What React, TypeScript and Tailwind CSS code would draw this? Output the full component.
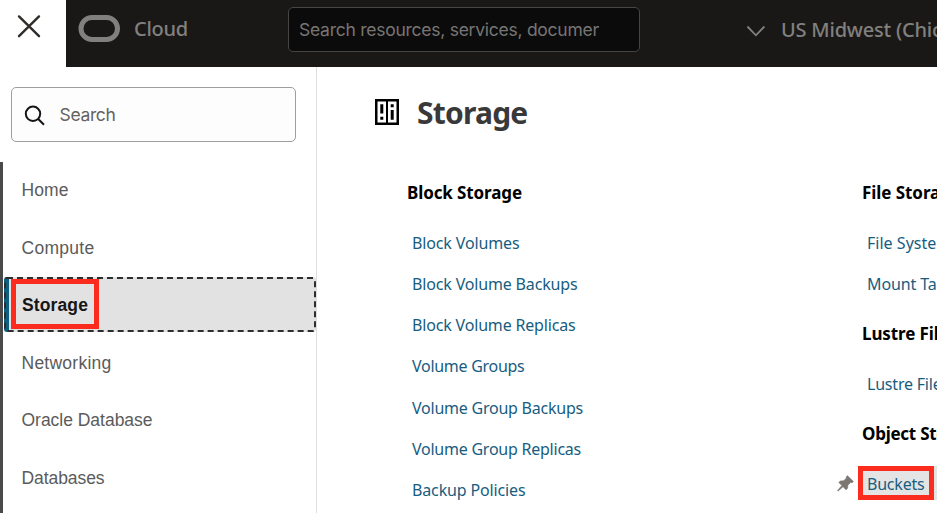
import React from "react";

const NOTO = "font-['Noto_Sans','Open_Sans',sans-serif]";

// One line of text tracked to a fixed advance width.
function Line({ children, w, className = "" }: { children: string; w: number; className?: string }) {
  const ref = React.useRef<HTMLSpanElement>(null);
  React.useLayoutEffect(() => {
    const el = ref.current!;
    el.style.letterSpacing = "0px";
    const natural = el.getBoundingClientRect().width;
    el.style.letterSpacing = `${(w - natural) / children.length}px`;
  }, [children, w]);
  return (
    <span ref={ref} className={`inline-block whitespace-pre ${className}`}>
      {children}
    </span>
  );
}

const nav: [string, number][] = [
  ["Home", 47],
  ["Compute", 73],
  ["Storage", 66],
  ["Networking", 90],
  ["Oracle Database", 131],
  ["Databases", 83],
];

const blockLinks: [string, number][] = [
  ["Block Volumes", 107.5],
  ["Block Volume Backups", 165.5],
  ["Block Volume Replicas", 163.5],
  ["Volume Groups", 112.5],
  ["Volume Group Backups", 171],
  ["Volume Group Replicas", 169],
  ["Backup Policies", 113.5],
];

function Header() {
  return (
    <header className="flex h-[67px] w-full bg-[#1a1816]">
      <button className="flex h-[67px] w-[66px] shrink-0 bg-white pt-[14px] pl-[17px]" aria-label="Close">
        <svg width="24" height="24" viewBox="0 0 24 24" fill="none" stroke="#2f2c2a" strokeWidth="2.4" strokeLinecap="round">
          <path d="M2 2.4 22 22.2M22 2.4 2 22.2" />
        </svg>
      </button>
      <div className="flex h-[66px] w-[222px] shrink-0 items-start pl-3">
        <svg className="mt-[15px]" width="42" height="27" viewBox="0 0 42 27" fill="none" stroke="#81807f" strokeWidth="5">
          <rect x="3" y="2.5" width="36.5" height="22" rx="11" />
        </svg>
        <div className="mt-[14px] ml-[14px] text-[20px] leading-[30px] font-medium text-[#81807f]">
          <Line w={54}>Cloud</Line>
        </div>
      </div>
      <div className="mt-[7px] h-[45px] w-[352px] shrink-0 rounded-[5px] border border-[#464544] bg-[#0b0b0b] pl-[10px] font-[Inter,sans-serif] text-[17.5px] leading-[44px] text-[#777573]">
        <div className="w-[300px] overflow-hidden">
          <Line w={309}>Search resources, services, document</Line>
        </div>
      </div>
      <div className="flex min-w-0 flex-1 overflow-hidden pl-[107px]">
        <svg className="mt-[25px] shrink-0" width="19" height="12" viewBox="0 0 19 12" fill="none" stroke="#81807f" strokeWidth="1.8">
          <path d="M.4 1.5 8.9 10.3 17.4 1.5" />
        </svg>
        <div className="mt-[15px] ml-[15px] shrink-0 text-[20px] leading-[30px] font-medium text-[#81807f]">
          <Line w={202}>US Midwest (Chicago)</Line>
        </div>
      </div>
    </header>
  );
}

function Sidebar() {
  return (
    <aside className="flex h-[446px] w-[317px] shrink-0 flex-col border-r border-[#dedede] pt-5">
      <div className="ml-[11px] flex h-[55px] w-[285px] shrink-0 items-center rounded-[5px] border border-[#a09e9b] bg-[#fdfdfd] pl-[12px]">
        <svg className="mt-[3px]" width="22" height="22" viewBox="0 0 22 22" fill="none" stroke="#161513" strokeWidth="2">
          <circle cx="9" cy="8.8" r="7.2" />
          <path d="M14.2 14 20 19.8" />
        </svg>
        <div className="ml-[13.5px] font-[Inter,sans-serif] text-[17.5px] leading-6 text-[#65625f]">
          <Line w={56}>Search</Line>
        </div>
      </div>
      <nav className="mt-5 flex h-[351px] shrink-0 flex-col overflow-hidden border-l-[3px] border-[#4a4a4a] font-['Liberation_Sans',Arial,sans-serif] text-[17.5px] text-[#5b5b5b]">
        {nav.map(([label, w]) =>
          label === "Storage" ? (
            <div key={label} className="relative h-[57.6px] shrink-0">
              <div className="ml-[1px] flex h-[55px] w-[312px] items-center overflow-hidden rounded-[3px] bg-[#e2e2e2] pl-[18px] font-bold text-[#161616]">
                <Line w={w}>{label}</Line>
              </div>
              <div className="absolute top-0 left-[1px] h-[55px] w-[5px] rounded-l-[3px] bg-[#0f5f80]" />
              <svg className="absolute top-0 left-[1px]" width="312" height="55" fill="none" stroke="#2d2d2d" strokeWidth="2">
                <rect x="1" y="1" width="310" height="53" rx="2" strokeDasharray="6 4" />
              </svg>
              <div className="absolute top-[2px] left-[8px] h-[50px] w-[88px] border-[5px] border-[#fb2c1d]" />
            </div>
          ) : (
            <div key={label} className="flex h-[57.6px] shrink-0 items-center pb-[1.2px] pl-[18.5px]">
              <Line w={w}>{label}</Line>
            </div>
          ),
        )}
      </nav>
    </aside>
  );
}

function Heading({ children, w }: { children: string; w: number }) {
  return (
    <h2 className="text-[17px] leading-6 font-bold text-black">
      <Line w={w}>{children}</Line>
    </h2>
  );
}

function LinkRow({ children, w }: { children: string; w: number }) {
  return (
    <a className="flex h-[41.2px] items-center pl-[5px] text-[16px] text-[#175d80]">
      <Line w={w}>{children}</Line>
    </a>
  );
}

function Content() {
  return (
    <main className="flex min-w-0 flex-1 flex-col">
      <div className="flex h-[114px] pt-[27px] pl-[58px]">
        <svg className="mt-[5px]" width="24" height="26" viewBox="0 0 24 26">
          <path d="M0 0h24v26H0z" fill="#000" />
          <path d="M2.5 2.5h8.5v21H2.5zM13 2.5h8.5v21H13z" fill="#fff" />
          <path d="M5.3 5.2h3v9.3h-3zM5.3 17.8h3v3h-3zM15.7 5.2h3v3h-3zM15.7 11h3v9.8h-3z" fill="#000" />
        </svg>
        <h1 className="ml-[18px] text-[30px] leading-[38px] font-bold text-[#393939]">
          <Line w={110.5}>Storage</Line>
        </h1>
      </div>
      <div className="flex pl-[90px]">
        <section className="w-[455px] shrink-0">
          <Heading w={115}>Block Storage</Heading>
          <div className="mt-[17.3px]">
            {blockLinks.map(([t, w]) => (
              <LinkRow key={t} w={w}>{t}</LinkRow>
            ))}
          </div>
        </section>
        <section className="w-[200px] shrink-0">
          <Heading w={99}>File Storage</Heading>
          <div className="mt-[17.3px]">
            <LinkRow w={92}>File Systems</LinkRow>
            <LinkRow w={108}>Mount Targets</LinkRow>
          </div>
          <div className="mt-[17.3px]">
            <Heading w={156}>Lustre File Storage</Heading>
          </div>
          <div className="mt-[17.3px]">
            <LinkRow w={139}>Lustre File Systems</LinkRow>
          </div>
          <div className="mt-[17.1px]">
            <Heading w={122}>Object Storage</Heading>
          </div>
          <div className="relative mt-[20.4px] flex h-[34px] items-center bg-[#e4e4e4] pt-[2px] pl-[5px] text-[16px] text-[#175d80]">
            <Line w={57.5}>Buckets</Line>
            <div className="absolute top-0 left-[-4px] h-[34px] w-[76px] border-[5px] border-[#fb2c1d]" />
            <svg className="absolute top-[9px] left-[-25px]" width="17" height="17" viewBox="0 0 17 17" fill="#7b7672" stroke="#7b7672" strokeWidth=".6" strokeLinejoin="round">
              <path d="M10.5.7 16.4 6.5 15 7.8 13.6 7.4 10.9 10.2 10.6 13.3 9 14.8 6 11.7 1.2 16 .5 15.6 4.9 10.5 1.8 7.4 3.4 6 6.6 5.8 9.5 3.1 9.1 1.9Z" />
            </svg>
          </div>
        </section>
      </div>
    </main>
  );
}

export default function App() {
  return (
    <div className={`flex h-[513px] w-[937px] flex-col overflow-hidden bg-white ${NOTO}`}>
      <Header />
      <div className="flex min-h-0 flex-1">
        <Sidebar />
        <Content />
      </div>
    </div>
  );
}
